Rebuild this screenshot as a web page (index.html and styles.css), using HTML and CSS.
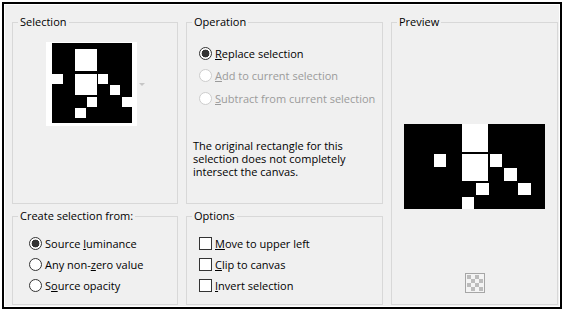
FILE: index.html
```html
<!DOCTYPE html>
<html lang="en">
<head>
    <meta charset="UTF-8">
    <title>Selection From Mask</title>
    <link rel="stylesheet" href="styles.css">
</head>
<body>
    <div class="frame">
        <fieldset class="group">
            <legend>Selection</legend>
            <div class="thumb-row">
                <div class="thumb">
                    <svg width="80" height="80" viewBox="0 0 80 80">
                        <rect width="80" height="80" fill="#000"/>
                        <g fill="#fff">
                            <rect x="23" y="6" width="22" height="22"/>
                            <rect x="23" y="31" width="22" height="21"/>
                            <rect x="0" y="31" width="11" height="10"/>
                            <rect x="46" y="31" width="10" height="10"/>
                            <rect x="58" y="42" width="10" height="10"/>
                            <rect x="35" y="54" width="10" height="10"/>
                            <rect x="70" y="54" width="10" height="10"/>
                            <rect x="23" y="65" width="11" height="10"/>
                        </g>
                    </svg>
                </div>
                <span class="caret"></span>
            </div>
        </fieldset>

        <fieldset class="group">
            <legend>Operation</legend>
            <div class="choices op-choices">
                <label class="choice"><span class="radio on"></span><span><u>R</u>eplace selection</span></label>
                <label class="choice off"><span class="radio"></span><span><u>A</u>dd to current selection</span></label>
                <label class="choice off"><span class="radio"></span><span><u>S</u>ubtract from current selection</span></label>
            </div>
            <p class="note">The original rectangle for this<br>selection does not completely<br>intersect the canvas.</p>
        </fieldset>

        <fieldset class="group preview">
            <legend>Preview</legend>
            <div class="preview-body">
                <svg width="141" height="85" viewBox="0 0 141 85">
                    <rect width="141" height="85" fill="#000"/>
                    <g fill="#fff">
                        <rect x="58" y="0" width="26" height="28"/>
                        <rect x="58" y="30" width="26" height="27"/>
                        <rect x="30" y="30" width="12" height="13"/>
                        <rect x="86" y="30" width="12" height="13"/>
                        <rect x="100" y="44" width="13" height="13"/>
                        <rect x="72" y="59" width="13" height="12"/>
                        <rect x="114" y="59" width="13" height="12"/>
                        <rect x="58" y="73" width="12" height="12"/>
                    </g>
                </svg>
                <svg class="checker" width="20" height="20" viewBox="0 0 20 20">
                    <rect x="0.5" y="0.5" width="19" height="19" fill="#f4f4f4" stroke="#a6a6a6"/>
                    <g fill="#bcbcbc">
                        <rect x="2" y="2" width="4" height="4"/>
                        <rect x="10" y="2" width="4" height="4"/>
                        <rect x="6" y="6" width="4" height="4"/>
                        <rect x="14" y="6" width="4" height="4"/>
                        <rect x="2" y="10" width="4" height="4"/>
                        <rect x="10" y="10" width="4" height="4"/>
                        <rect x="6" y="14" width="4" height="4"/>
                        <rect x="14" y="14" width="4" height="4"/>
                    </g>
                </svg>
            </div>
        </fieldset>

        <fieldset class="group">
            <legend>Create selection from:</legend>
            <div class="choices small-choices create-choices">
                <label class="choice"><span class="radio on"></span><span>Source <u>l</u>uminance</span></label>
                <label class="choice"><span class="radio"></span><span>Any non-<u>z</u>ero value</span></label>
                <label class="choice"><span class="radio"></span><span>S<u>o</u>urce opacity</span></label>
            </div>
        </fieldset>

        <fieldset class="group">
            <legend>Options</legend>
            <div class="choices small-choices option-choices">
                <label class="choice"><span class="check"></span><span><u>M</u>ove to upper left</span></label>
                <label class="choice"><span class="check"></span><span><u>C</u>lip to canvas</span></label>
                <label class="choice"><span class="check"></span><span><u>I</u>nvert selection</span></label>
            </div>
        </fieldset>
    </div>
</body>
</html>
```

FILE: styles.css
```css
* {
    box-sizing: border-box;
    margin: 0;
    padding: 0;
}
body {
    background: #fff;
    font-family: 'Open Sans', 'Noto Sans', sans-serif;
    font-size: 11px;
    line-height: 13px;
    color: #000;
}
.frame {
    width: 560px;
    height: 307px;
    margin: 2px 0 0 2px;
    border: 2px solid #000;
    box-shadow: inset 0 0 0 1px #fff;
    background: #f0f0f0;
    padding: 11px 2px 2px 8px;
    display: grid;
    grid-template-columns: 166px 197px 167px;
    grid-template-rows: 189px 96px;
    column-gap: 8px;
    row-gap: 5px;
}
.group {
    border: 1px solid #d8d8d8;
    min-width: 0;
}
.group legend {
    margin-left: 5px;
    padding: 0 2px;
    height: 14px;
    line-height: 14px;
}
.preview {
    grid-column: 3;
    grid-row: 1 / span 2;
}

/* selection thumbnail */
.thumb-row {
    display: flex;
    align-items: center;
    gap: 2px;
    margin: 13px 0 0 33px;
}
.thumb {
    background: #fff;
    padding: 1px 5px 3px 6px;
}
.thumb svg {
    display: block;
}
.caret {
    width: 0;
    height: 0;
    border-left: 3px solid transparent;
    border-right: 3px solid transparent;
    border-top: 3px solid #c6c6c6;
}

/* radio + checkbox rows */
.choices {
    display: flex;
    flex-direction: column;
}
.choice {
    display: flex;
    align-items: center;
    gap: 3px;
    height: 22.5px;
}
.small-choices .choice {
    height: 21px;
}
.op-choices {
    padding: 13px 0 0 12px;
}
.create-choices {
    padding: 9.5px 0 0 16px;
}
.option-choices {
    padding: 9.5px 0 0 12px;
}
.choice.off {
    color: #9b9b9b;
}
.radio {
    width: 13px;
    height: 13px;
    border: 1px solid #333;
    border-radius: 50%;
    background: #fff;
    flex-shrink: 0;
}
.radio.on {
    background: radial-gradient(circle, #333 0 3.6px, #fff 4.2px);
}
.off .radio {
    border-color: #cdcdcd;
}
.check {
    width: 13px;
    height: 13px;
    border: 1px solid #333;
    background: #fff;
    flex-shrink: 0;
}
u {
    text-decoration: underline;
    text-underline-offset: 1px;
}

.note {
    margin: 29.5px 0 0 6px;
}

/* preview */
.preview-body {
    display: flex;
    flex-direction: column;
    align-items: center;
    gap: 64px;
    padding-top: 95px;
}
.preview-body svg {
    display: block;
}
```
